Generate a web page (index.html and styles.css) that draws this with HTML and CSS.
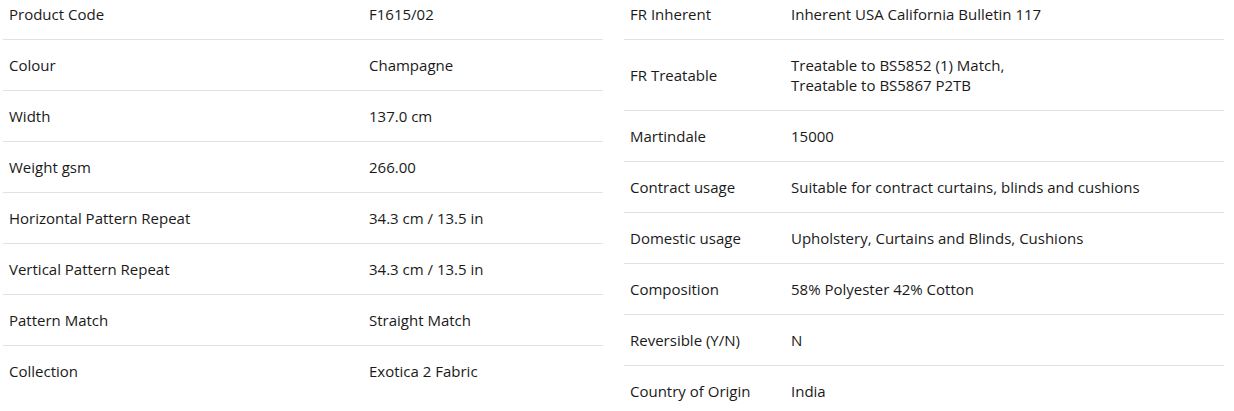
FILE: index.html
```html
<!DOCTYPE html>
<html>
<head>
<meta charset="utf-8">
<link rel="stylesheet" href="styles.css">
</head>
<body>
<div class="specs">
  <table class="spec-table spec-left">
    <tr><td class="label">Product Code</td><td class="value">F1615/02</td></tr>
    <tr><td class="label">Colour</td><td class="value">Champagne</td></tr>
    <tr><td class="label">Width</td><td class="value">137.0 cm</td></tr>
    <tr><td class="label">Weight gsm</td><td class="value">266.00</td></tr>
    <tr><td class="label">Horizontal Pattern Repeat</td><td class="value">34.3 cm / 13.5 in</td></tr>
    <tr><td class="label">Vertical Pattern Repeat</td><td class="value">34.3 cm / 13.5 in</td></tr>
    <tr><td class="label">Pattern Match</td><td class="value">Straight Match</td></tr>
    <tr><td class="label">Collection</td><td class="value">Exotica 2 Fabric</td></tr>
  </table>
  <table class="spec-table spec-right">
    <tr><td class="label">FR Inherent</td><td class="value">Inherent USA California Bulletin 117</td></tr>
    <tr><td class="label">FR Treatable</td><td class="value">Treatable to BS5852 (1) Match,<br>Treatable to BS5867 P2TB</td></tr>
    <tr><td class="label">Martindale</td><td class="value">15000</td></tr>
    <tr><td class="label">Contract usage</td><td class="value">Suitable for contract curtains, blinds and cushions</td></tr>
    <tr><td class="label">Domestic usage</td><td class="value">Upholstery, Curtains and Blinds, Cushions</td></tr>
    <tr><td class="label">Composition</td><td class="value">58% Polyester 42% Cotton</td></tr>
    <tr><td class="label">Reversible (Y/N)</td><td class="value">N</td></tr>
    <tr><td class="label">Country of Origin</td><td class="value">India</td></tr>
  </table>
</div>
</body>
</html>
```

FILE: styles.css
```css
html, body {
  margin: 0;
  padding: 0;
  background: #ffffff;
}

body {
  font-family: "Open Sans", "Lato", sans-serif;
  font-size: 15px;
  color: #1a1a1a;
}

.specs {
  display: flex;
  gap: 21px;
  padding-left: 3px;
  margin-top: -11px;
  align-items: flex-start;
}

.spec-table {
  width: 600px;
  border-collapse: collapse;
  table-layout: fixed;
}

.spec-table td {
  padding: 15px 6px;
  line-height: 20px;
  vertical-align: middle;
  border-bottom: 1px solid #e1e1e1;
}

.spec-table tr:last-child td {
  border-bottom: none;
}

.spec-left .label {
  width: 348px;
}

.spec-right .label {
  width: 149px;
}
```
